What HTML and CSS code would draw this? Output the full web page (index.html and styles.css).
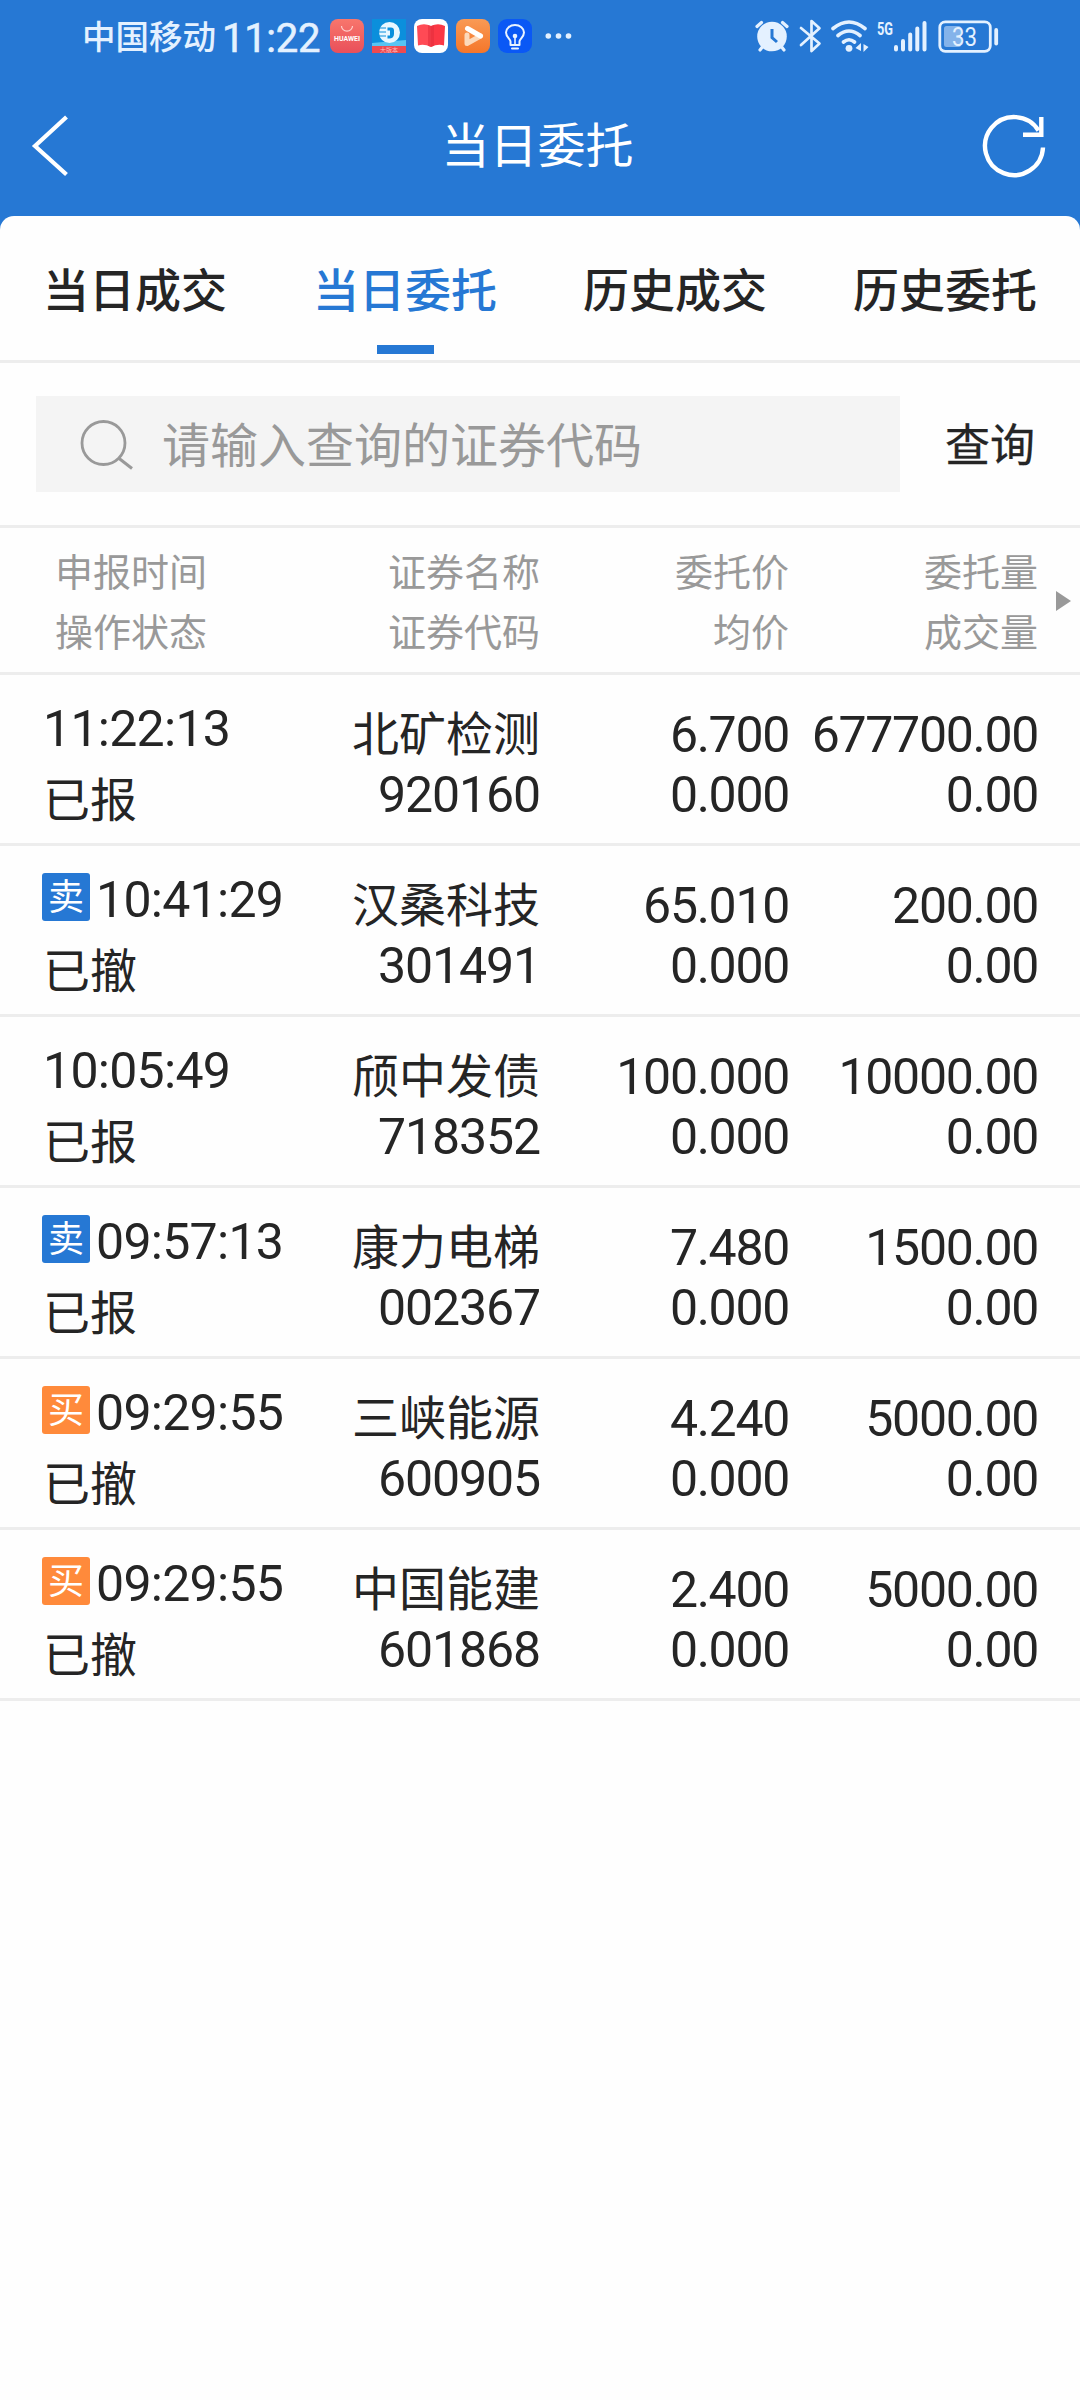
FILE: index.html
```html
<!DOCTYPE html>
<html lang="zh-CN">
<head>
<meta charset="utf-8">
<title>当日委托</title>
<link rel="stylesheet" href="styles.css">
</head>
<body>
<header class="top">
  <div class="status">
    <span class="carrier">中国移动</span>
    <span class="clock">11:22</span>
    <div class="apps">
      <svg width="34" height="34" viewBox="0 0 34 34">
        <defs><linearGradient id="g1" x1="0" y1="0" x2="0" y2="1"><stop offset="0" stop-color="#f8766c"/><stop offset="1" stop-color="#e94f5a"/></linearGradient></defs>
        <rect width="34" height="34" rx="8" fill="url(#g1)"/>
        <path d="M11.5 7a5.5 5.2 0 0 0 11 0" fill="none" stroke="#ffd0cc" stroke-width="1.2"/>
        <text x="17" y="22" class="app-huawei" text-anchor="middle" textLength="26" lengthAdjust="spacingAndGlyphs">HUAWEI</text>
      </svg>
      <svg width="34" height="34" viewBox="0 0 34 34">
        <rect width="34" height="34" fill="#0b8fdc"/>
        <path d="M0 24l34-3v6H0z" fill="#57c4f2"/>
        <circle cx="17.500" cy="13.500" r="10.500" fill="#e9f7ff"/>
        <path d="M15.500 8.500h3.500a3 3 0 0 1 3 3v3.500c0 3-2 4.500-5 4.500h-1.500v-3h2.500v-5h-2.500z" fill="#0b8fdc"/>
        <path d="M5 9h9M5 13h9M5 17h9" stroke="#0b8fdc" stroke-width="1.200"/>
        <rect y="27" width="34" height="7" fill="#ee4a50"/>
        <text x="17" y="33" class="app-bank" text-anchor="middle">大版本</text>
      </svg>
      <svg width="34" height="34" viewBox="0 0 34 34">
        <rect width="34" height="34" rx="8" fill="#fff"/>
        <path d="M3 7q7-3.500 14 0v21q-7-3.500-13-1.500z" fill="#ff4a55"/>
        <path d="M31 7q-7-3.500-14 0v21q7-3.500 13-1.500z" fill="#fb3845"/>
        <path d="M14 6q1.500.3 3 1v21l-3-1.200zM20 6q-1.500.3-3 1v21l3-1.200z" fill="#e52f3d" opacity=".6"/>
      </svg>
      <svg width="34" height="34" viewBox="0 0 34 34">
        <defs><linearGradient id="g4" x1="0" y1="0" x2="0" y2="1"><stop offset="0" stop-color="#f99a55"/><stop offset="1" stop-color="#f5762a"/></linearGradient></defs>
        <rect width="34" height="34" rx="8" fill="url(#g4)"/>
        <path d="M11 16v8.500L24.500 17" fill="none" stroke="#fcd9bb" stroke-width="5" stroke-linejoin="round" stroke-linecap="round"/>
        <path d="M11.500 9.500L24.500 17" stroke="#fff" stroke-width="5" stroke-linecap="round"/>
      </svg>
      <svg width="34" height="34" viewBox="0 0 34 34">
        <rect width="34" height="34" rx="9" fill="#0a58f5"/>
        <path d="M12.500 26v-3.500c0-2.500-4.500-4.500-4.500-9a9 7.500 0 0 1 18 0c0 4.500-4.500 6.500-4.500 9V26M12.500 26h9M14 29.500h6" fill="none" stroke="#e8f2ff" stroke-width="2" stroke-linejoin="round" stroke-linecap="round"/>
        <circle cx="17" cy="17" r="2.300" fill="#e8f2ff"/><path d="M17 17v9" stroke="#e8f2ff" stroke-width="1.600"/>
      </svg>
    </div>
    <svg class="more" width="28" height="8" viewBox="0 0 28 8"><g fill="#e4f1ff"><circle cx="4.300" cy="4" r="2.800"/><circle cx="14.500" cy="4" r="2.800"/><circle cx="24.500" cy="4" r="2.800"/></g></svg>
    <svg class="system" width="250" height="40" viewBox="750 16 250 40" fill="none" stroke="#e4f1ff">
      <circle cx="772" cy="36.500" r="14.800" fill="#e4f1ff" stroke="none"/>
      <path d="M772 29v8.500l5 4.500" stroke="#2678d4" stroke-width="3"/>
      <path d="M757 26.500l4.500-4M787 26.500l-4.500-4M760 50l3.500-4.500M784 50l-3.500-4.500" stroke-width="3.200" stroke-linecap="round"/>
      <path d="M801 28l18.500 15.500-8 7.500V21l8 7.200L801 45" stroke-width="2.700" stroke-linejoin="round" stroke-linecap="round"/>
      <path d="M833 28.500q16-13 32 0M838 35.500q11-9 22 0M843.500 42q5.500-4.500 11 0" stroke-width="3.600" stroke-linecap="round"/>
      <circle cx="849" cy="48.300" r="3.400" fill="#e4f1ff" stroke="none"/>
      <path d="M861 43v8l-5.500-3zM863.500 44v8l5-5z" fill="#e4f1ff" stroke="none"/>
      <text x="877" y="35" class="net" textLength="16" lengthAdjust="spacingAndGlyphs">5G</text>
      <path d="M896 47v2.500M903 41v8.500M910.200 34.500v15M917.300 28.500v21M924.500 23v26.500" stroke-width="4" stroke-linecap="round"/>
      <rect x="939.800" y="21.800" width="50.500" height="29.500" rx="5.500" stroke-width="2.800"/>
      <rect x="944" y="26" width="17" height="21" rx="2.500" fill="#84b3ea" stroke="none"/>
      <text x="964.500" y="46" class="level" text-anchor="middle" textLength="25" lengthAdjust="spacingAndGlyphs">33</text>
      <path d="M996.200 30v13.500" stroke-width="3.800" stroke-linecap="round"/>
    </svg>
  </div>
  <nav class="nav">
    <svg width="40" height="66" viewBox="0 0 40 66"><path d="M36.500 5L5 34l31.500 28.500" fill="none" stroke="#fff" stroke-width="4.200"/></svg>
    <h1>当日委托</h1>
    <svg width="66" height="66" viewBox="0 0 66 66"><path d="M62 35.500A29 29 0 1 1 57.500 18.500" fill="none" stroke="#fff" stroke-width="4.400"/><path d="M60.300 5v17.800H42" fill="none" stroke="#fff" stroke-width="4.400"/></svg>
  </nav>
</header>
<main class="sheet">
  <div class="tabs">
    <a class="tab">当日成交</a>
    <a class="tab active">当日委托</a>
    <a class="tab">历史成交</a>
    <a class="tab">历史委托</a>
  </div>
  <div class="search">
    <div class="field">
      <svg width="56" height="56" viewBox="0 0 56 56" fill="none" stroke="#999" stroke-width="2.800"><circle cx="25.500" cy="27" r="21.500"/><path d="M40.500 42L54 52.500" stroke-width="3"/></svg>
      <span>请输入查询的证券代码</span>
    </div>
    <a class="query">查询</a>
  </div>
  <div class="row head">
    <div class="first"><p>申报时间</p><p>操作状态</p></div>
    <div><p>证券名称</p><p>证券代码</p></div>
    <div><p>委托价</p><p>均价</p></div>
    <div><p>委托量</p><p>成交量</p></div>
    <i class="arrow"></i>
  </div>
  <div class="row">
    <div class="first"><p class="time">11:22:13</p><p>已报</p></div>
    <div class="name"><p>北矿检测</p><p class="num">920160</p></div>
    <div class="num"><p>6.700</p><p>0.000</p></div>
    <div class="num"><p>677700.00</p><p>0.00</p></div>
  </div>
  <div class="row">
    <div class="first"><p class="time"><b class="badge sell">卖</b>10:41:29</p><p>已撤</p></div>
    <div class="name"><p>汉桑科技</p><p class="num">301491</p></div>
    <div class="num"><p>65.010</p><p>0.000</p></div>
    <div class="num"><p>200.00</p><p>0.00</p></div>
  </div>
  <div class="row">
    <div class="first"><p class="time">10:05:49</p><p>已报</p></div>
    <div class="name"><p>颀中发债</p><p class="num">718352</p></div>
    <div class="num"><p>100.000</p><p>0.000</p></div>
    <div class="num"><p>10000.00</p><p>0.00</p></div>
  </div>
  <div class="row">
    <div class="first"><p class="time"><b class="badge sell">卖</b>09:57:13</p><p>已报</p></div>
    <div class="name"><p>康力电梯</p><p class="num">002367</p></div>
    <div class="num"><p>7.480</p><p>0.000</p></div>
    <div class="num"><p>1500.00</p><p>0.00</p></div>
  </div>
  <div class="row">
    <div class="first"><p class="time"><b class="badge buy">买</b>09:29:55</p><p>已撤</p></div>
    <div class="name"><p>三峡能源</p><p class="num">600905</p></div>
    <div class="num"><p>4.240</p><p>0.000</p></div>
    <div class="num"><p>5000.00</p><p>0.00</p></div>
  </div>
  <div class="row">
    <div class="first"><p class="time"><b class="badge buy">买</b>09:29:55</p><p>已撤</p></div>
    <div class="name"><p>中国能建</p><p class="num">601868</p></div>
    <div class="num"><p>2.400</p><p>0.000</p></div>
    <div class="num"><p>5000.00</p><p>0.00</p></div>
  </div>
</main>
</body>
</html>
```
FILE: styles.css
```css
* { box-sizing: border-box; margin: 0; padding: 0; }
body {
  width: 1080px;
  min-height: 2400px;
  background: #fefefe;
  color: #252525;
  font-family: Roboto, "Noto Sans CJK SC", sans-serif;
  white-space: nowrap;
}
svg { display: block; flex: none; }
.top { height: 230px; background: #2678d4; color: #fff; }
.status { display: flex; align-items: center; height: 72px; padding: 0 80px 0 82px; color: #e4f1ff; }
.carrier { width: 140px; font-size: 33.5px; line-height: 40px; padding-top: 4px; font-weight: 500; }
.clock { width: 108px; font-size: 40px; line-height: 40px; padding-top: 5px; font-weight: 400; letter-spacing: -.3px; -webkit-text-stroke: .6px #e4f1ff; }
.apps { display: flex; gap: 8px; }
.more { margin-left: 12px; }
.system { margin-left: auto; }
.app-huawei { font: bold 6.5px Roboto, sans-serif; fill: #fff; }
.app-bank { font: 6px "Noto Sans CJK SC", sans-serif; fill: #fbb; }
.net { font: bold 19px Roboto, sans-serif; fill: #e4f1ff; stroke: none; }
.level { font: 400 26px Roboto, sans-serif; fill: #e4f1ff; stroke: none; }
.nav { display: flex; align-items: center; justify-content: space-between; height: 144px; padding: 1px 33px 0 30px; }
.nav h1 { font-size: 48px; font-weight: 400; line-height: 60px; padding: 5px 0 0 24px; }
.sheet { margin-top: -14px; background: #fefefe; border-radius: 14px 14px 0 0; }
.tabs { display: grid; grid-template-columns: repeat(4, 1fr); height: 147px; border-bottom: 3px solid #ededed; }
.tab { display: flex; flex-direction: column; align-items: center; padding-top: 45px; font-size: 46px; line-height: 60px; font-weight: 500; }
.active { color: #2678d4; }
.active::after { content: ""; width: 57px; height: 9px; margin-top: 24px; background: #2678d4; }
.search { display: flex; align-items: center; height: 165px; padding-left: 36px; border-bottom: 3px solid #ededed; }
.field { display: flex; align-items: center; width: 864px; height: 96px; padding-left: 42px; gap: 28px; background: #f4f4f4; color: #999; font-size: 48px; }
.field span { line-height: 60px; padding-top: 5px; }
.query { flex: 1; padding-top: 6px; font-size: 45px; line-height: 60px; text-align: center; -webkit-text-stroke: .3px #252525; }
.row { display: grid; grid-template-columns: 300px 240px 249px 249px; height: 171px; padding-top: 30px; border-bottom: 3px solid #ededed; font-size: 47px; line-height: 60px; text-align: right; }
.row .first { margin-top: -12px; padding-left: 43px; line-height: 72px; text-align: left; }
.row .first p:last-child { font-size: 47px; }
.num { font-size: 50px; letter-spacing: -1.3px; }
.name .num { letter-spacing: -1.1px; }
.row .time { display: flex; align-items: center; font-size: 50px; letter-spacing: -.7px; }
.badge { width: 48px; height: 48px; margin: 0 6px 6px -1px; padding-top: 1px; border-radius: 3px; color: #fff; font-size: 36px; line-height: 48px; font-weight: 400; text-align: center; letter-spacing: 0; }
.sell { background: #2678d4; }
.buy { background: #ff8a3b; }
.row.head { grid-template-columns: 300px 240px 249px 249px 41px; height: 147px; padding-top: 15px; color: #999; font-size: 38px; }
.head .first { margin-top: 0; padding-left: 55px; line-height: 60px; }
.row.head .first p:last-child { font-size: inherit; }
.arrow { width: 0; height: 0; margin: 48px 0 0 18px; border: solid transparent; border-width: 10px 0 10px 15px; border-left-color: #999; }
```
